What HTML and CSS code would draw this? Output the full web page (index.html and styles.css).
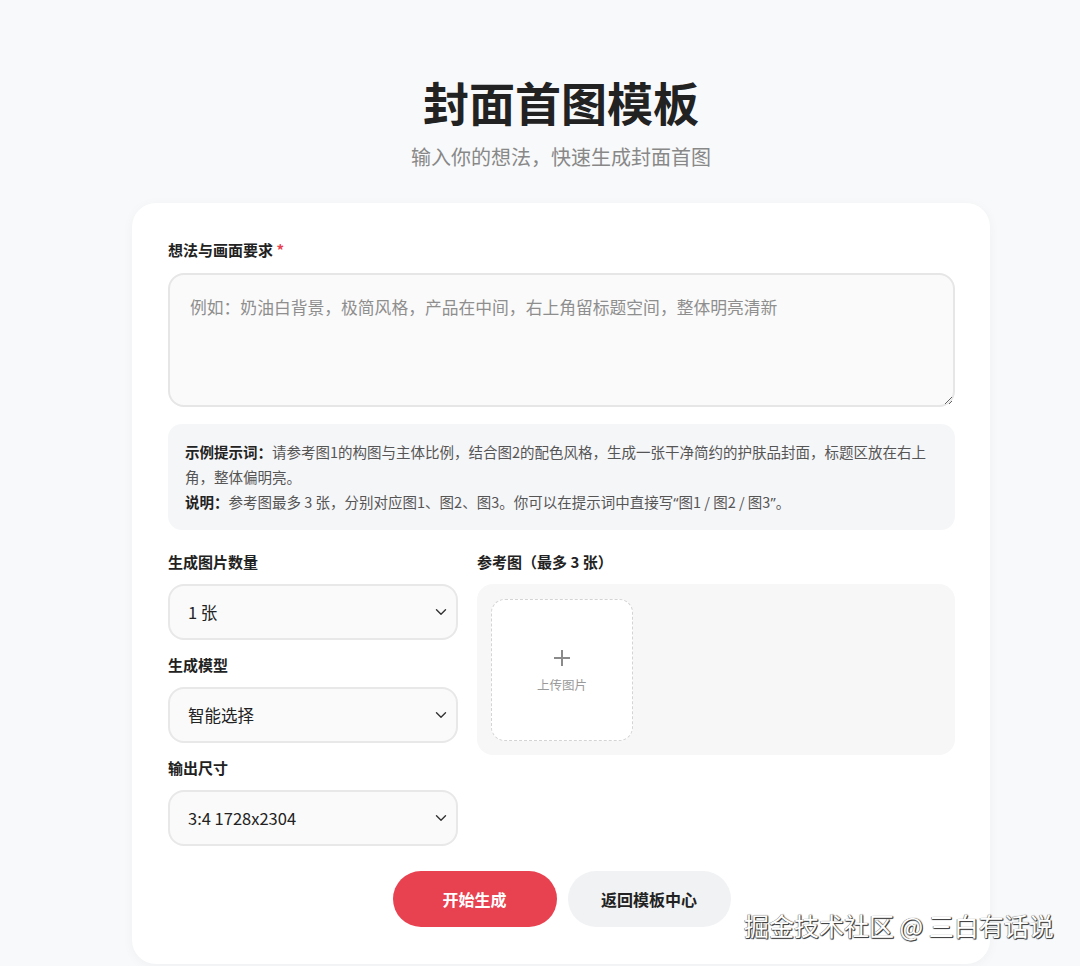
FILE: index.html
```html
<!DOCTYPE html>
<html lang="zh-CN">
<head>
<meta charset="utf-8">
<title>封面首图模板</title>
<link rel="stylesheet" href="styles.css">
</head>
<body>
<div class="container">
  <h1 class="title">封面首图模板</h1>
  <p class="subtitle">输入你的想法，快速生成封面首图</p>
  <div class="card">
    <div class="field-label">想法与画面要求 <span class="req">*</span></div>
    <textarea class="idea" placeholder="例如：奶油白背景，极简风格，产品在中间，右上角留标题空间，整体明亮清新"></textarea>
    <div class="tips">
      <p><b>示例提示词：</b>请参考图1的构图与主体比例，结合图2的配色风格，生成一张干净简约的护肤品封面，标题区放在右上角，整体偏明亮。</p>
      <p><b>说明：</b>参考图最多 3 张，分别对应图1、图2、图3。你可以在提示词中直接写<span class="latin">“</span>图1 / 图2 / 图3<span class="latin">”</span>。</p>
    </div>
    <div class="grid">
      <div class="left">
        <div class="field-label">生成图片数量</div>
        <div class="select"><span>1 张</span><svg width="12" height="8" viewBox="0 0 12 8"><path d="M1.5 1.8 6 6.2 10.5 1.8" fill="none" stroke="#333" stroke-width="1.4" stroke-linecap="round" stroke-linejoin="round"/></svg></div>
        <div class="field-label">生成模型</div>
        <div class="select"><span>智能选择</span><svg width="12" height="8" viewBox="0 0 12 8"><path d="M1.5 1.8 6 6.2 10.5 1.8" fill="none" stroke="#333" stroke-width="1.4" stroke-linecap="round" stroke-linejoin="round"/></svg></div>
        <div class="field-label">输出尺寸</div>
        <div class="select"><span>3:4 1728x2304</span><svg width="12" height="8" viewBox="0 0 12 8"><path d="M1.5 1.8 6 6.2 10.5 1.8" fill="none" stroke="#333" stroke-width="1.4" stroke-linecap="round" stroke-linejoin="round"/></svg></div>
      </div>
      <div class="right">
        <div class="field-label">参考图（最多 3 张）</div>
        <div class="uploads">
          <div class="tile">
            <svg width="18" height="18" viewBox="0 0 18 18"><path d="M9 1v16M1 9h16" stroke="#8a8a8a" stroke-width="2"/></svg>
            <span>上传图片</span>
          </div>
        </div>
      </div>
    </div>
    <div class="actions">
      <button class="btn primary">开始生成</button>
      <button class="btn secondary">返回模板中心</button>
    </div>
  </div>
</div>
<div class="watermark">掘金技术社区 @ 三白有话说</div>
</body>
</html>
```
FILE: styles.css
```css
* { box-sizing: border-box; }
html, body { margin: 0; padding: 0; }
body {
  background: #f8f9fa;
  font-family: "Noto Sans CJK SC", "Noto Sans", sans-serif;
  color: #222;
  height: 966px;
  overflow: hidden;
}
.container {
  width: 858px;
  margin-left: 132px;
  padding-top: 73px;
}
.title {
  margin: 0;
  text-align: center;
  font-size: 46px;
  line-height: 56px;
  font-weight: 700;
  color: #222;
}
.subtitle {
  margin: 14px 0 0;
  text-align: center;
  font-size: 20px;
  line-height: 28px;
  color: #888;
}
.card {
  margin-top: 32px;
  background: #fff;
  border-radius: 24px;
  padding: 37px 35px 37px 36px;
  box-shadow: 0 2px 12px rgba(0,0,0,0.04);
}
.field-label {
  font-size: 15px;
  font-weight: 700;
  line-height: 20px;
  color: #222;
}
.req { color: #e8414f; }
.idea {
  display: block;
  width: 100%;
  height: 134px;
  margin-top: 13px;
  border: 2px solid #e6e6e6;
  border-radius: 16px;
  background: #fafafa;
  padding: 19px 20px;
  font-family: "Noto Sans CJK SC", sans-serif;
  font-size: 16.8px;
  line-height: 26px;
  color: #333;
  outline: none;
}
.idea::placeholder { color: #8e8e8e; }
.tips {
  margin-top: 17px;
  background: #f5f6f8;
  border-radius: 14px;
  padding: 15px 17px 15px;
  font-size: 14.5px;
  line-height: 25px;
  color: #555;
}
.tips p { margin: 0; }
.tips b { color: #222; font-weight: 700; }
.latin { font-family: "Noto Sans", sans-serif; }
.grid {
  margin-top: 22px;
  display: grid;
  grid-template-columns: 290px 1fr;
  column-gap: 19px;
}
.left .field-label { margin-top: 15px; }
.left .field-label:first-child { margin-top: 0; }
.select {
  margin-top: 12px;
  height: 56px;
  border: 2px solid #e8e8e8;
  border-radius: 16px;
  background: #fafafa;
  display: flex;
  align-items: center;
  justify-content: space-between;
  padding: 0 9px 0 18px;
  font-size: 16.5px;
  color: #222;
}
.uploads {
  margin-top: 12px;
  height: 171px;
  background: #f7f7f7;
  border-radius: 16px;
  padding: 15px 14px;
}
.tile {
  width: 142px;
  height: 142px;
  border: 1.5px dashed #d4d4d4;
  border-radius: 14px;
  background: #fff;
  display: flex;
  flex-direction: column;
  align-items: center;
  justify-content: center;
  gap: 9px;
}
.tile svg { margin-top: 2px; }
.tile span {
  font-size: 12.5px;
  color: #9a9a9a;
  line-height: 18px;
}
.actions {
  margin-top: 25px;
  display: flex;
  justify-content: center;
  gap: 11px;
}
.btn {
  height: 56px;
  width: 164px;
  border: none;
  border-radius: 28px;
  font-family: "Noto Sans CJK SC", sans-serif;
  font-size: 16px;
  font-weight: 700;
}
.primary { background: #e8414f; color: #fff; }
.secondary { background: #f1f2f4; color: #222; width: 163px; }
.watermark {
  position: absolute;
  left: 744px;
  top: 908px;
  font-size: 25px;
  line-height: 34px;
  color: #fff;
  white-space: nowrap;
  text-shadow: 1px 1px 0 #444, -0.5px -0.5px 0 #777, 1px 0 1px #555, 0 1px 1px #555;
}
```
